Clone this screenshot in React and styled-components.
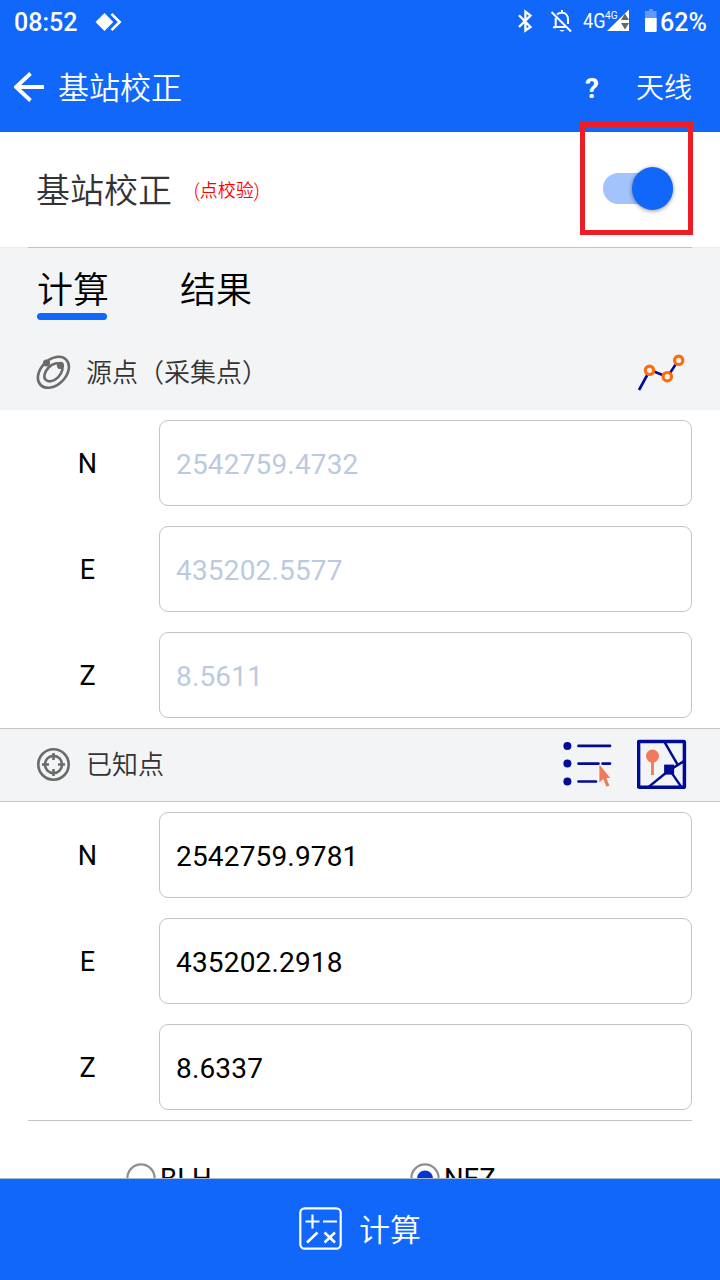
import React from "react";
import styled, { createGlobalStyle } from "styled-components";

const Global = createGlobalStyle`
  * { box-sizing: border-box; }
  body { margin: 0; background: #fff; }
  body, input, button { font-family: Roboto, "Noto Sans CJK SC", sans-serif; }
  svg { display: block; flex: none; }
`;

const Screen = styled.div`
  position: relative;
  width: 720px;
  height: 1280px;
  overflow: hidden;
  display: flex;
  flex-direction: column;
  background: #fff;
  color: #000;
`;

const StatusBar = styled.header`
  flex: none;
  height: 44px;
  padding: 0 14px;
  display: flex;
  align-items: center;
  background: #1167fa;
  color: #fff;
`;

const Clock = styled.span`
  width: 81px;
  padding-top: 2px;
  font-size: 25px;
  line-height: 42px;
  font-weight: 500;
`;

const StatusIcons = styled.div`
  margin-left: auto;
  display: flex;
  align-items: center;
`;

const Battery = styled.span`
  width: 46px;
  margin-left: 3px;
  padding-top: 2px;
  font-size: 25px;
  line-height: 42px;
  font-weight: 500;
  white-space: nowrap;
`;

const AppBar = styled.nav`
  flex: none;
  height: 88px;
  padding: 0 28px 2px 14px;
  display: flex;
  align-items: center;
  background: #1167fa;
  color: #fff;
`;

const BarTitle = styled.h1`
  margin: 0 auto 0 14px;
  padding-top: 3px;
  font-size: 31px;
  line-height: 40px;
  font-weight: 350;
`;

const HelpMark = styled.span`
  width: 51px;
  padding-top: 2px;
  font-size: 28px;
  font-weight: 700;
`;

const BarAction = styled.span`
  padding-top: 4px;
  font-size: 28px;
  line-height: 40px;
  font-weight: 350;
`;

const SwitchRow = styled.section`
  flex: none;
  height: 115px;
  padding: 0 47px 0 36px;
  display: flex;
  align-items: center;
`;

const SwitchLabel = styled.span`
  padding-top: 3px;
  font-size: 34px;
  line-height: 50px;
  font-weight: 350;
  color: #333;
`;

const SwitchHint = styled.span`
  margin: 0 auto 2px 22px;
  font-size: 18px;
  font-weight: 350;
  color: #f00;
`;

const Track = styled.div`
  width: 70px;
  height: 31px;
  border-radius: 16px;
  display: flex;
  align-items: center;
  justify-content: flex-end;
  background: #a3c3fc;
  margin-top: -2px;
`;

const Thumb = styled.div`
  flex: none;
  width: 41px;
  height: 43px;
  border-radius: 50%;
  background: #1167fa;
  box-shadow: 0 1px 4px rgba(0, 0, 0, 0.45);
`;

const Highlight = styled.div`
  position: absolute;
  left: 580px;
  top: 122px;
  width: 113px;
  height: 113px;
  border: 5px solid #ee1c25;
`;

const Rule = styled.div`
  flex: none;
  height: 1px;
  border: solid ${(p) => p.$ends || "#fff"};
  border-width: 0 28px;
  background: #c4c4c6;
`;

const Tabs = styled.div`
  flex: none;
  height: 87px;
  padding: 17px 37px 0;
  display: flex;
  align-items: flex-start;
  gap: 73px;
  background: #f3f4f6;
`;

const Tab = styled.div`
  width: 70px;
  font-size: 36px;
  line-height: 52px;
  font-weight: 350;
  white-space: nowrap;
`;

const TabMark = styled.div`
  width: 70px;
  height: 7px;
  margin-top: -4px;
  border-radius: 4px;
  background: #1167fa;
`;

const SectionHead = styled.div`
  flex: none;
  height: ${(p) => p.$height}px;
  padding: 0 33px 2px 36px;
  display: flex;
  align-items: center;
  background: #f3f4f6;
  border: solid #c4c4c6;
  border-width: ${(p) => (p.$lined ? "1px 0" : "0")};
`;

const SectionTitle = styled.span`
  margin: 0 auto 0 15px;
  padding-top: 2px;
  font-size: 26px;
  line-height: 38px;
  font-weight: 350;
  color: #333;
`;

const SectionTools = styled.div`
  display: flex;
  align-items: center;
  gap: 24px;
`;

const Fields = styled.div`
  flex: none;
  padding: 10px 28px 10px 0;
  display: flex;
  flex-direction: column;
  gap: 20px;
`;

const Field = styled.label`
  height: 86px;
  display: flex;
  align-items: center;
`;

const FieldName = styled.span`
  width: 159px;
  padding-top: 2px;
  padding-left: 16px;
  text-align: center;
  font-size: 27px;
`;

const FieldBox = styled.input`
  flex: 1;
  min-width: 0;
  height: 86px;
  padding: 3px 16px 0;
  border: 1px solid #c4c4c6;
  border-radius: 9px;
  outline: none;
  background: #fff;
  color: #000;
  font-size: 28px;
  letter-spacing: 0.17px;
  &:disabled { color: #bccadf; }
`;

const Options = styled.div`
  flex: none;
  height: 57px;
  padding: 42px 0 0 126px;
  display: flex;
  align-items: flex-start;
  overflow: hidden;
`;

const Option = styled.div`
  width: 284px;
  flex: none;
  display: flex;
  align-items: flex-start;
  gap: 4px;
  font-size: 27.5px;
  line-height: 31px;
`;

const Submit = styled.button`
  flex: none;
  height: 102px;
  margin: 0;
  padding: 0 0 2px;
  border: 0;
  border-top: 1px solid #a9b8d2;
  display: flex;
  align-items: center;
  justify-content: center;
  gap: 17px;
  background: #1167fa;
  color: #fff;
  font-size: 31px;
  font-weight: 350;
`;

const SubmitText = styled.span`
  padding-bottom: 2px;
`;

const RemoteIcon = () => (
  <svg width="27" height="20" viewBox="0 0 27 20">
    <path d="M9.5 1L18.3 10L9.5 19L0.5 10Z" fill="#fff" />
    <path d="M16.5 1.8L24.7 10L16.5 18.2" fill="none" stroke="#fff" strokeWidth="2.6" />
  </svg>
);

const StatusGlyphs = () => (
  <svg width="142" height="44" viewBox="515 0 142 44">
    <path d="M519 15.2L530.5 27L525.4 30.5V11.5L530.5 15.5L519 27" fill="none" stroke="#fff" strokeWidth="2.3" />
    <path d="M551.5 12L571 31.5" stroke="#fff" strokeWidth="2" />
    <path d="M557 14.4C558.6 13.1 560.2 12.7 562 12.7C566 12.7 568 16 568 19.5V24M555.7 18V27H565.5M553 27.3H556M562 10V13" fill="none" stroke="#fff" strokeWidth="2" />
    <path d="M559.5 30H564.5Q562 33 559.5 30Z" fill="#fff" />
    <text x="583" y="27.5" fill="#fff" fontSize="20.5" textLength="22.5" lengthAdjust="spacingAndGlyphs">4G</text>
    <text x="605" y="18.5" fill="#fff" fontSize="11.5" textLength="12.5" lengthAdjust="spacingAndGlyphs">4G</text>
    <path d="M629 9.5V31H607Z" fill="#fff" />
    <path d="M625 13.5L629 20H621ZM621 23H629L625 29.5Z" fill="#666" />
    <path d="M649 9H653V11H656.5V18H645V11H649Z" fill="#6299fb" />
    <path d="M645 18H656.7V31Q656.7 32 655.7 32H646Q645 32 645 31Z" fill="#fff" />
  </svg>
);

const BackIcon = () => (
  <svg width="30" height="30" viewBox="0 0 30 30">
    <path d="M16.5 1.5L2 15L16.5 28.5M2 15H30" fill="none" stroke="#fff" strokeWidth="3.8" />
  </svg>
);

const OrbitIcon = () => (
  <svg width="35" height="36" viewBox="0 0 35 36" fill="none" stroke="#6b6b6b">
    <ellipse cx="17.4" cy="18.3" rx="18" ry="12.5" strokeWidth="2.6" transform="rotate(-45 17.4 18.3)" />
    <ellipse cx="17.4" cy="18.3" rx="10.8" ry="6.8" strokeWidth="2.6" transform="rotate(-45 17.4 18.3)" />
    <circle cx="10.5" cy="9" r="3.6" fill="#6b6b6b" stroke="none" />
    <circle cx="24.5" cy="11.4" r="3.6" fill="#6b6b6b" stroke="none" />
  </svg>
);

const TargetIcon = () => (
  <svg width="35" height="35" viewBox="0 0 35 35" fill="none" stroke="#6b6b6b" strokeWidth="2.6">
    <circle cx="17.5" cy="17.5" r="15.2" />
    <circle cx="17.5" cy="17.5" r="8.6" />
    <path d="M17.5 6V13M17.5 22V29M6 17.5H13M22 17.5H29" />
  </svg>
);

const PolylineIcon = () => (
  <svg width="50" height="40" viewBox="0 -1 50 40">
    <path d="M2 37L13 17L30.5 24L41.5 7" fill="none" stroke="#000c96" strokeWidth="2.6" />
    <g fill="#f3f4f6" stroke="#ff6b08" strokeWidth="3.2">
      <circle cx="12.5" cy="17.3" r="4.2" />
      <circle cx="30.3" cy="23.7" r="4.2" />
      <circle cx="41.7" cy="7.3" r="4.2" />
    </g>
  </svg>
);

const PickListIcon = () => (
  <svg width="50" height="50" viewBox="0 -0.5 50 50">
    <g fill="#000c96">
      <circle cx="4.4" cy="6.4" r="4" />
      <circle cx="4.4" cy="24.1" r="4" />
      <circle cx="4.4" cy="42" r="4" />
    </g>
    <path d="M15.5 6.4H47M15.5 24.1H35.5M39.5 24.1H47M15.5 42H33" stroke="#000c96" strokeWidth="2.7" strokeLinecap="round" />
    <path d="M36.4 25V43L40.2 39.5L43.5 47.2L46.4 45.9L43.3 38.5H47.2Z" fill="#f07a5c" />
  </svg>
);

const MapIcon = () => (
  <svg width="50" height="50" viewBox="0.2 -0.6 50 50">
    <path d="M27.5 2L40.5 24.5M11 48L32 31L48 21M34 32L45 48" fill="none" stroke="#000c96" strokeWidth="2.5" />
    <rect x="1.8" y="1.8" width="45.8" height="45.8" rx="0.8" fill="none" stroke="#000c96" strokeWidth="3.5" />
    <rect x="27.3" y="25" width="10" height="10" fill="#000c96" />
    <path d="M15.7 16V35.5" stroke="#f07a5c" strokeWidth="2.8" />
    <circle cx="15.7" cy="16.5" r="6.5" fill="#f07a5c" />
  </svg>
);

const RadioIcon = ({ checked }) => (
  <svg width="30" height="30" viewBox="0 0 30 30">
    <circle cx="15" cy="15" r="13.6" fill="#fff" stroke="#8f8f8f" strokeWidth="2.2" />
    {checked && <circle cx="15" cy="15.4" r="8" fill="#0636cf" />}
  </svg>
);

const CalcIcon = () => (
  <svg width="43" height="43" viewBox="0 0 43 43" fill="none" stroke="#fff" strokeWidth="2.2">
    <rect x="1.3" y="1.3" width="40.4" height="40.4" rx="4.5" />
    <path d="M6.5 14.5H20.5M13.5 7.5V21.5M24 14.5H38" />
    <path d="M8 35.5L18.5 25.5M25.5 25.5L36 35.5M36 25.5L25.5 35.5" strokeWidth="2.6" />
  </svg>
);

const sourcePoint = [["N", "2542759.4732"], ["E", "435202.5577"], ["Z", "8.5611"]];
const knownPoint = [["N", "2542759.9781"], ["E", "435202.2918"], ["Z", "8.6337"]];

const Coordinates = ({ values, disabled }) => (
  <Fields>
    {values.map(([name, value]) => (
      <Field key={name}>
        <FieldName>{name}</FieldName>
        <FieldBox defaultValue={value} disabled={disabled} />
      </Field>
    ))}
  </Fields>
);

export default function App() {
  return (
    <Screen>
      <Global />
      <StatusBar>
        <Clock>08:52</Clock>
        <RemoteIcon />
        <StatusIcons>
          <StatusGlyphs />
          <Battery>62%</Battery>
        </StatusIcons>
      </StatusBar>
      <AppBar>
        <BackIcon />
        <BarTitle>基站校正</BarTitle>
        <HelpMark>?</HelpMark>
        <BarAction>天线</BarAction>
      </AppBar>
      <SwitchRow>
        <SwitchLabel>基站校正</SwitchLabel>
        <SwitchHint>(点校验)</SwitchHint>
        <Track><Thumb /></Track>
      </SwitchRow>
      <Rule $ends="#ebebed" />
      <Tabs>
        <Tab>计算<TabMark /></Tab>
        <Tab>结果</Tab>
      </Tabs>
      <SectionHead $height={75}>
        <OrbitIcon />
        <SectionTitle>源点（采集点）</SectionTitle>
        <PolylineIcon />
      </SectionHead>
      <Coordinates values={sourcePoint} disabled />
      <SectionHead $height={74} $lined>
        <TargetIcon />
        <SectionTitle>已知点</SectionTitle>
        <SectionTools>
          <PickListIcon />
          <MapIcon />
        </SectionTools>
      </SectionHead>
      <Coordinates values={knownPoint} />
      <Rule />
      <Options>
        <Option><RadioIcon />BLH</Option>
        <Option><RadioIcon checked />NEZ</Option>
      </Options>
      <Submit><CalcIcon /><SubmitText>计算</SubmitText></Submit>
      <Highlight />
    </Screen>
  );
}
